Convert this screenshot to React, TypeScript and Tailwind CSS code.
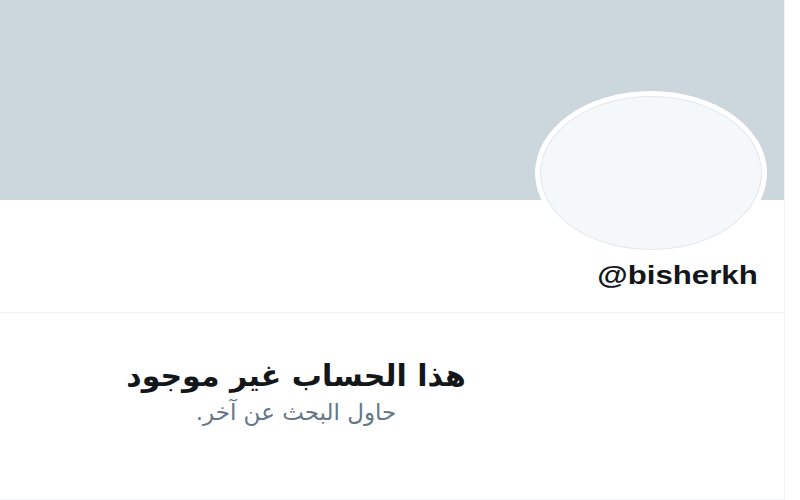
export default function App() {
  return (
    <div className="w-[800px] h-[500px] bg-white overflow-hidden font-['DejaVu_Sans',sans-serif]">
      <div className="relative w-[785px] h-[500px] border-r border-[#eff3f4] flex flex-col">
        {/* banner */}
        <div className="h-[200px] bg-[#ccd6dd] shrink-0" />

        {/* avatar over banner */}
        <div className="absolute left-[535px] top-[91px] w-[232px] h-[164px] rounded-[50%] bg-white p-[5px]">
          <div className="w-full h-full rounded-[50%] bg-[#f5f8fa] border border-[#e1e8ed]" />
        </div>

        {/* handle row */}
        <div className="h-[113px] shrink-0 border-b border-[#eff3f4] flex justify-end pr-[26px] pt-[59px]">
          <div className="font-['Liberation_Sans',sans-serif] font-bold text-[26px] leading-[32px] text-[#14171a] scale-x-[1.2] origin-right">
            @bisherkh
          </div>
        </div>

        {/* empty state */}
        <div dir="rtl" className="flex-1 border-b border-[#eff3f4] flex">
          <div className="w-[592px] ml-auto mr-[192px] flex flex-col items-center pt-[45px]">
            <div className="text-[30px] font-bold leading-[36px] text-[#14171a]">هذا الحساب غير موجود</div>
            <div className="text-[23px] leading-[28px] text-[#657786] mt-[4px]">حاول البحث عن آخر.</div>
          </div>
        </div>
      </div>
    </div>
  );
}
